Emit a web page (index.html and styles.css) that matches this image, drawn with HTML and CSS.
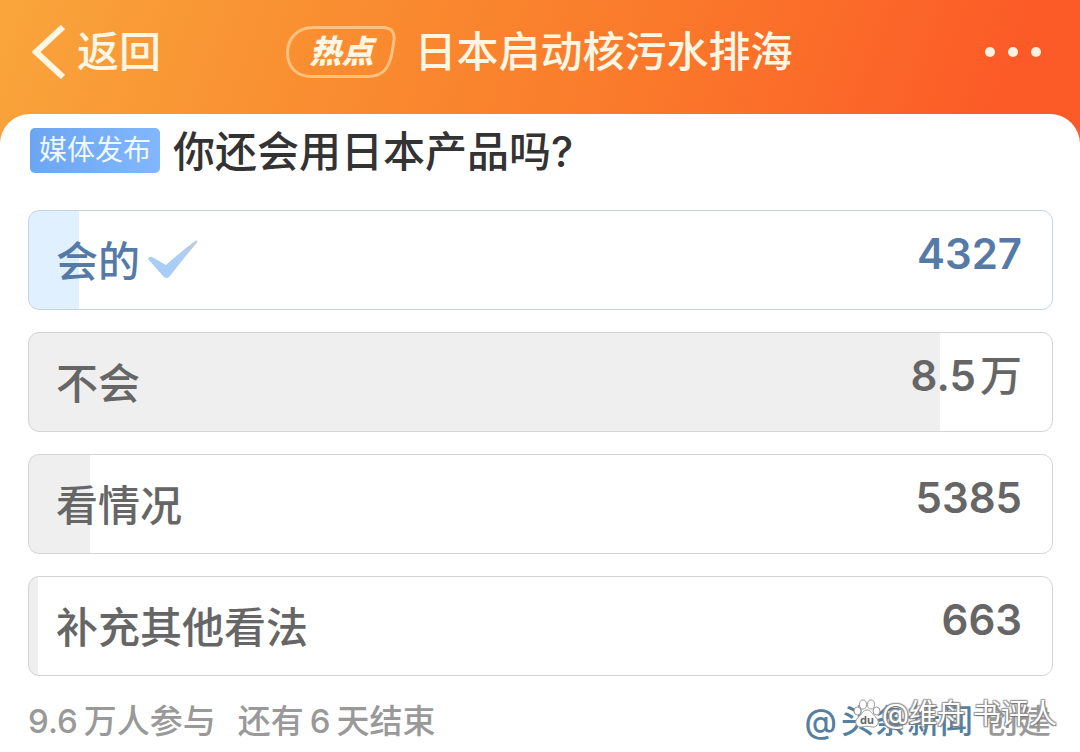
FILE: index.html
```html
<!DOCTYPE html>
<html lang="zh-CN">
<head>
<meta charset="utf-8">
<meta name="viewport" content="width=device-width, initial-scale=1">
<title>日本启动核污水排海</title>
<link rel="stylesheet" href="styles.css">
</head>
<body>
<header class="topbar">
  <button class="back" type="button">
    <svg class="back-icon" viewBox="0 0 34 56" aria-hidden="true"><path d="M31 3 4 28 31 53"/></svg>
    <span>返回</span>
  </button>
  <div class="heading">
    <span class="hot">
      <svg class="hot-outline" viewBox="0 0 110 52" aria-hidden="true"><path d="M27 1.5H97C105 1.5 109 6 108 14L106 27C103 43 96 50.500 82 50.500H25C11 50.500 1.500 41 1.500 27C1.500 12 12 1.500 27 1.500Z"/></svg>
      <span class="hot-text">热点</span>
    </span>
    <h1 class="title">日本启动核污水排海</h1>
  </div>
  <button class="more" type="button" aria-label="更多"><i></i><i></i><i></i></button>
</header>
<main class="card">
  <div class="question">
    <span class="badge">媒体发布</span>
    <h2 class="question-text">你还会用日本产品吗?</h2>
  </div>
  <div class="options">
    <button class="option chosen" type="button" style="--share: 4.9%">
      <span class="label">会的</span>
      <svg class="tick" viewBox="0 0 50 40" aria-hidden="true">
        <defs><linearGradient id="tick-fill" x1="0" y1="1" x2="1" y2="0"><stop offset="0" stop-color="#a3cbf8"/><stop offset=".6" stop-color="#adcef4"/><stop offset="1" stop-color="#bccbdd"/></linearGradient></defs>
        <path fill="url(#tick-fill)" d="M0 19Q1 16 4 17L18 25Q32 12 48 0.500Q50 0 49 2.500Q36 18 22 36Q18.500 40 15 36Z"/>
      </svg>
      <span class="count">4327</span>
    </button>
    <button class="option" type="button" style="--share: 89.1%">
      <span class="label">不会</span>
      <span class="count"><span>8.5</span><span class="unit">万</span></span>
    </button>
    <button class="option" type="button" style="--share: 6%">
      <span class="label">看情况</span>
      <span class="count">5385</span>
    </button>
    <button class="option" type="button" style="--share: 0.9%">
      <span class="label">补充其他看法</span>
      <span class="count">663</span>
    </button>
  </div>
  <footer class="meta">
    <span class="stat"><span>9.6</span><span>万人参与</span></span>
    <span class="stat"><span>还有</span><span>6</span><span>天结束</span></span>
    <span class="author"><a class="author-link" href="#"><span>@</span><span>头条新闻</span></a><span>创建</span></span>
    <span class="watermark">
      <svg class="paw" viewBox="0 0 28 30" aria-hidden="true">
        <ellipse cx="4.500" cy="12" rx="3.500" ry="4"/><ellipse cx="10" cy="5.500" rx="3.500" ry="4.500"/><ellipse cx="18" cy="5.500" rx="3.500" ry="4.500"/><ellipse cx="23.500" cy="12" rx="3.500" ry="4"/>
        <path d="M14 11C18 11 19 15 23 18.500C28 23 24 29 19 28C15 27 13 27 9 28C4 29 0 23 5 18.500C9 15 10 11 14 11Z"/>
        <text x="14" y="25">du</text>
      </svg>
      <span>@维舟 书评人</span>
    </span>
  </footer>
</main>
</body>
</html>
```
FILE: styles.css
```css
* {
  box-sizing: border-box;
}

body {
  margin: 0;
  min-height: 100vh;
  font-family: Inter, "Noto Sans CJK SC", sans-serif;
  font-weight: 500;
  color: #666;
  background: linear-gradient(110deg, #f9a53c 0, #f98f31 28%, #fa7a2b 58%, #fc5a27 92%) 0 0 / 100% 160px no-repeat #fff;
}

h1,
h2 {
  margin: 0;
  font-size: 42px;
  font-weight: 500;
  line-height: 60px;
}

button {
  margin: 0;
  padding: 0;
  border: 0;
  background: none;
  color: inherit;
  font: inherit;
  cursor: pointer;
}

.topbar {
  display: grid;
  grid-template-columns: 1fr auto 1fr;
  align-items: center;
  height: 114px;
  padding: 0 39px 10px 32px;
  color: #fff6e4;
}

.back {
  display: flex;
  align-items: center;
  gap: 11px;
  font-size: 42px;
  line-height: 60px;
}

.back-icon {
  width: 34px;
  height: 56px;
  fill: none;
  stroke: currentColor;
  stroke-width: 6;
}

.heading {
  display: flex;
  align-items: center;
  gap: 18px;
  padding-left: 6px;
}

.hot {
  position: relative;
  display: flex;
  align-items: center;
  justify-content: center;
  width: 110px;
  height: 52px;
}

.hot-outline {
  position: absolute;
  inset: 0;
  fill: none;
  stroke: #fdc280;
  stroke-width: 3;
}

.hot-text {
  font-size: 32px;
  font-style: italic;
  font-weight: 900;
  line-height: 48px;
}

.more {
  display: flex;
  justify-self: end;
  gap: 13px;
  padding: 8px 0;
}

.more i {
  width: 10px;
  height: 10px;
  border-radius: 50%;
  background: #fff1e2;
}

.card {
  padding: 8px 27px 8px 28px;
  border-radius: 30px 30px 0 0;
  background: #fff;
}

.question {
  display: flex;
  align-items: center;
  gap: 13px;
  padding-left: 2px;
}

.badge {
  margin-bottom: 4px;
  padding: 0 9px;
  border-radius: 5px;
  background: linear-gradient(90deg, #6ca5f2, #82b7fc);
  color: #eff8ff;
  font-size: 28px;
  font-weight: 400;
  line-height: 45px;
}

.question-text {
  color: #333;
}

.options {
  display: grid;
  gap: 22px;
  margin-top: 28px;
}

.option {
  --fill: #efefef;
  display: flex;
  align-items: center;
  height: 100px;
  padding: 0 30px 0 27px;
  border: 1px solid #d2d4d6;
  border-radius: 11px;
  background: linear-gradient(var(--fill), var(--fill)) 0 0 / var(--share) 100% no-repeat #fff;
  font-size: 42px;
  line-height: 60px;
}

.chosen {
  --fill: #e0f0ff;
  border-color: #c5d5e0;
  color: #557aa8;
}

.label {
  padding-top: 4px;
}

.tick {
  width: 50px;
  height: 40px;
  margin-left: 8px;
}

.count {
  display: flex;
  gap: 4px;
  margin-left: auto;
  padding-bottom: 12px;
  font-weight: 600;
}

.unit {
  font-weight: 500;
}

.meta {
  position: relative;
  display: flex;
  gap: 22px;
  margin-top: 21px;
  padding-right: 2px;
  color: #999;
  font-size: 33px;
  font-weight: 500;
  line-height: 48px;
}

.stat {
  display: flex;
  gap: 6px;
}

.author {
  display: flex;
  gap: 12px;
  margin-left: auto;
}

.author-link {
  display: flex;
  gap: 4px;
  color: #557f9f;
  text-decoration: none;
}

.watermark {
  position: absolute;
  right: -4px;
  top: -3px;
  display: flex;
  align-items: center;
  gap: 1px;
  color: #fff;
  font-size: 28px;
  font-weight: 400;
  line-height: 40px;
  text-shadow: 1px 1px 1px #777, -1px -1px 1px #999, 1px -1px 1px #999, -1px 1px 1px #888;
}

.paw {
  width: 28px;
  height: 30px;
  fill: #fff;
  stroke: #999;
  stroke-width: 1;
}

.paw text {
  fill: #666;
  stroke: none;
  font-size: 11px;
  font-weight: 700;
  text-anchor: middle;
  text-shadow: none;
}
```
